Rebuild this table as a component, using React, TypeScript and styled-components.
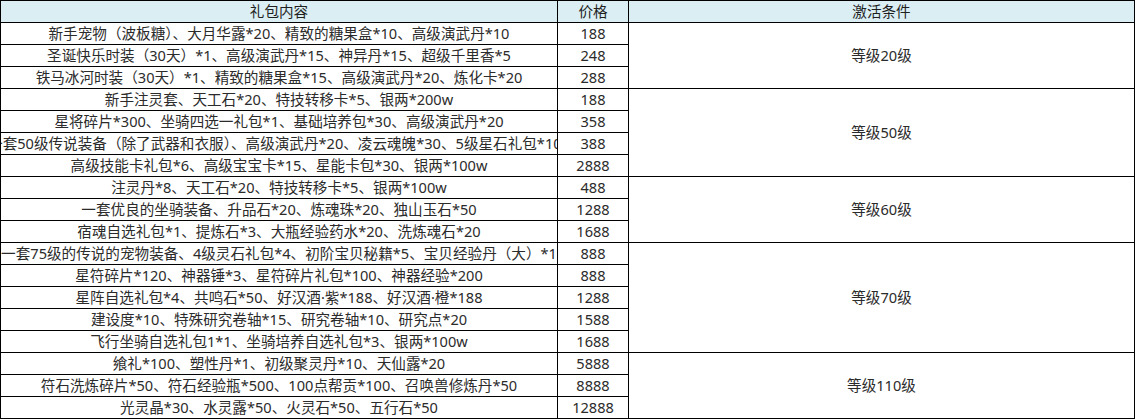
import React from 'react';
import styled, { createGlobalStyle } from 'styled-components';

const GlobalStyle = createGlobalStyle`
    html, body {
        margin: 0;
        padding: 0;
        background: #fff;
    }
`;

const GiftTable = styled.div`
    display: grid;
    grid-template-columns: 557px 71px 506px;
    grid-auto-rows: 22px;
    width: 1135px;
    box-sizing: border-box;
    border-top: 1px solid #000;
    border-left: 1px solid #000;
    font-family: 'Noto Sans', 'Noto Sans CJK SC', sans-serif;
    font-size: 14.6px;
    color: #2b2b2b;
`;

const Cell = styled.div<{ span?: number; head?: boolean }>`
    display: flex;
    align-items: center;
    justify-content: center;
    box-sizing: border-box;
    border-right: 1px solid #000;
    border-bottom: 1px solid #000;
    overflow: hidden;
    white-space: nowrap;
    line-height: 1;
    grid-row: span ${props => props.span || 1};
    background: ${props => (props.head ? '#daeef3' : '#fff')};
    color: ${props => (props.head ? '#1f1f1f' : '#2b2b2b')};
`;

const GiftGroups = [
    {
        level: '等级20级',
        items: [
            { content: '新手宠物（波板糖）、大月华露*20、精致的糖果盒*10、高级演武丹*10', price: '188' },
            { content: '圣诞快乐时装（30天）*1、高级演武丹*15、神异丹*15、超级千里香*5', price: '248' },
            { content: '铁马冰河时装（30天）*1、精致的糖果盒*15、高级演武丹*20、炼化卡*20', price: '288' },
        ],
    },
    {
        level: '等级50级',
        items: [
            { content: '新手注灵套、天工石*20、特技转移卡*5、银两*200w', price: '188' },
            { content: '星将碎片*300、坐骑四选一礼包*1、基础培养包*30、高级演武丹*20', price: '358' },
            { content: '一套50级传说装备（除了武器和衣服）、高级演武丹*20、凌云魂魄*30、5级星石礼包*100', price: '388' },
            { content: '高级技能卡礼包*6、高级宝宝卡*15、星能卡包*30、银两*100w', price: '2888' },
        ],
    },
    {
        level: '等级60级',
        items: [
            { content: '注灵丹*8、天工石*20、特技转移卡*5、银两*100w', price: '488' },
            { content: '一套优良的坐骑装备、升品石*20、炼魂珠*20、独山玉石*50', price: '1288' },
            { content: '宿魂自选礼包*1、提炼石*3、大瓶经验药水*20、洗炼魂石*20', price: '1688' },
        ],
    },
    {
        level: '等级70级',
        items: [
            { content: '一套75级的传说的宠物装备、4级灵石礼包*4、初阶宝贝秘籍*5、宝贝经验丹（大）*1', price: '888' },
            { content: '星符碎片*120、神器锤*3、星符碎片礼包*100、神器经验*200', price: '888' },
            { content: '星阵自选礼包*4、共鸣石*50、好汉酒·紫*188、好汉酒·橙*188', price: '1288' },
            { content: '建设度*10、特殊研究卷轴*15、研究卷轴*10、研究点*20', price: '1588' },
            { content: '飞行坐骑自选礼包1*1、坐骑培养自选礼包*3、银两*100w', price: '1688' },
        ],
    },
    {
        level: '等级110级',
        items: [
            { content: '飨礼*100、塑性丹*1、初级聚灵丹*10、天仙露*20', price: '5888' },
            { content: '符石洗炼碎片*50、符石经验瓶*500、100点帮贡*100、召唤兽修炼丹*50', price: '8888' },
            { content: '光灵晶*30、水灵露*50、火灵石*50、五行石*50', price: '12888' },
        ],
    },
];

const App = () => {
    return (
        <>
            <GlobalStyle />
            <GiftTable>
                <Cell head>礼包内容</Cell>
                <Cell head>价格</Cell>
                <Cell head>激活条件</Cell>
                {GiftGroups.map(group =>
                    group.items.map((item, i) => (
                        <React.Fragment key={group.level + i}>
                            <Cell>{item.content}</Cell>
                            <Cell>{item.price}</Cell>
                            {i === 0 && <Cell span={group.items.length}>{group.level}</Cell>}
                        </React.Fragment>
                    ))
                )}
            </GiftTable>
        </>
    );
};

export default App;
